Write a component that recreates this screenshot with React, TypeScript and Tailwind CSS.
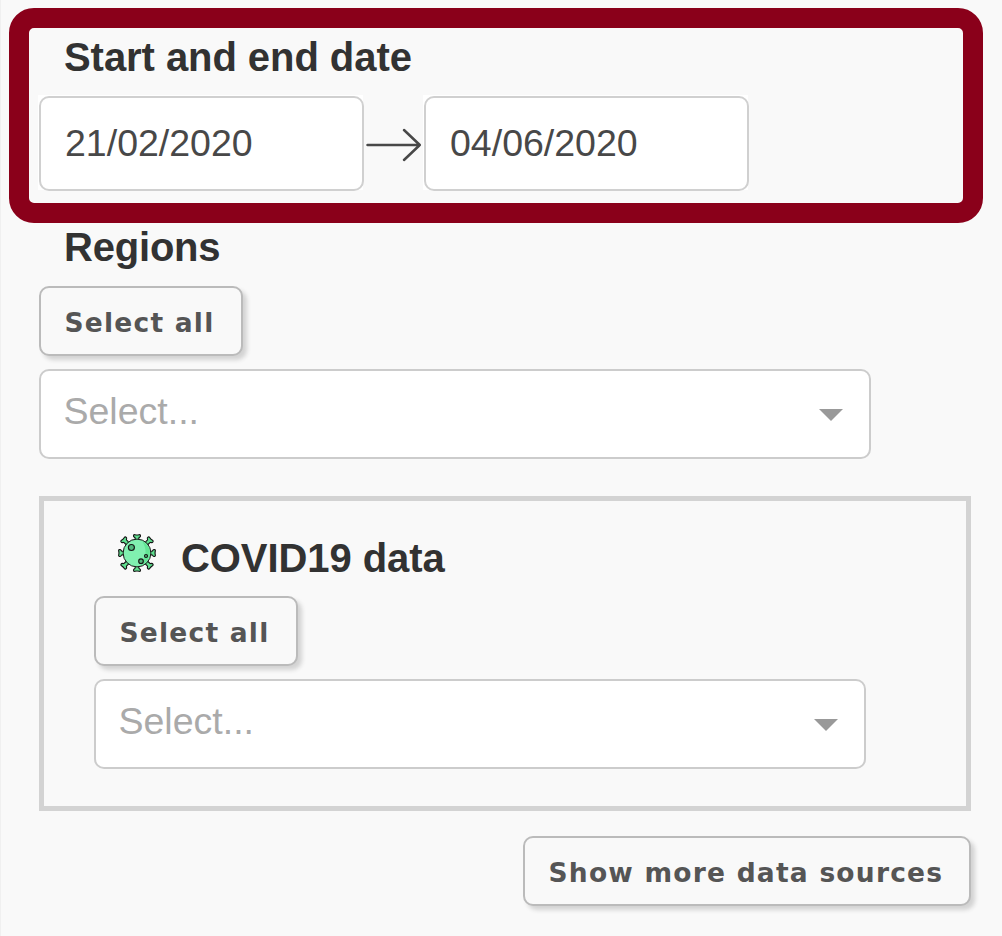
const spikes = [
  { angle: 0, reach: 0 },
  { angle: 45, reach: -1.6 },
  { angle: 90, reach: 0 },
  { angle: 135, reach: -1.6 },
  { angle: 180, reach: 0 },
  { angle: 225, reach: -1.6 },
  { angle: 270, reach: 0 },
  { angle: 315, reach: -1.6 },
];

function VirusIcon() {
  return (
    <svg className="h-[38px] w-[38px] shrink-0" viewBox="0 0 38 38" fill="none" stroke="#151515" strokeWidth="1.15" strokeLinejoin="round">
      {spikes.map(({ angle, reach }) => (
        <path
          key={angle}
          transform={`rotate(${angle} 19 19) translate(0 ${reach})`}
          fill="#5fe08f"
          d="M17.2 7.5V4.2Q17.1 3.4 16.2 3.1Q15.3 2.6 15.6 1.3Q15.9 .4 17 .7Q19 1.2 21 .7Q22.1 .4 22.4 1.3Q22.7 2.6 21.8 3.1Q20.9 3.4 20.8 4.2V7.5"
        />
      ))}
      <circle cx="19" cy="19" r="13.9" fill="#80f0b0" strokeWidth="1" />
      <path d="M24 7Q35.6 14 30 25.3Q27.5 29.7 22 31.6Q32 19 24 7Z" fill="#62e595" stroke="none" />
      <g fill="#50b87c">
        <circle cx="13.4" cy="13.5" r="3" />
        <circle cx="28" cy="22" r="1.5" />
        <circle cx="23" cy="27.2" r="2.3" />
      </g>
    </svg>
  );
}

function DateField({ value }: { value: string }) {
  return (
    <div className="h-[95px] w-[325px] shrink-0 bg-white pt-px pl-px">
      <div className="h-[95px] w-[325px] rounded-[10px] border-2 border-[#d0d0d0] bg-white pt-[22px] pl-6 text-[37.5px] leading-[46px] text-[#484848]">
        {value}
      </div>
    </div>
  );
}

function Button({ label, className = "" }: { label: string; className?: string }) {
  return (
    <button
      className={`flex h-[70px] items-center rounded-[10px] border-2 border-[#bbb] bg-[#f9f9f9] pt-[3px] pl-[23.5px] font-['DejaVu_Sans',sans-serif] text-[26.5px] font-bold tracking-[1.22px] whitespace-nowrap text-[#555] shadow-[4px_4px_4px_#d3d3d3] ${className}`}
    >
      {label}
    </button>
  );
}

function Select({ className = "" }: { className?: string }) {
  return (
    <div className={`flex h-[90px] justify-between rounded-[10px] border-2 border-[#ccc] bg-white pr-[26px] pl-[22.5px] ${className}`}>
      <span className="pt-[17px] text-[37.5px] leading-[46px] text-[#aaa]">Select...</span>
      <svg className="mt-[38px] h-3 w-6" viewBox="0 0 24 12" fill="#999">
        <path d="M0 0H24L12 12Z" />
      </svg>
    </div>
  );
}

export default function App() {
  return (
    <main className="flex h-[936px] w-[1002px] flex-col overflow-hidden border-l border-[#f0f0f0] bg-[#f9f9f9] pt-2 pl-2 font-['Liberation_Sans',Arial,sans-serif] text-[#323232]">
      <section className="h-[215px] w-[974px] shrink-0 rounded-[25px] border-[20px] border-[#8a001a] pt-[5px] pl-[9px]">
        <h2 className="pl-[26px] text-[40px] leading-[48px] font-bold tracking-[-0.06px]">Start and end date</h2>
        <div className="mt-[14px] flex">
          <DateField value="21/02/2020" />
          <svg className="h-[95px] w-[60px] shrink-0" viewBox="0 0 60 95" fill="none" stroke="#484848" strokeWidth="2.5" strokeLinecap="round" strokeLinejoin="round">
            <path d="M4.5 50H56.8M41 35L56.8 50L41 65" />
          </svg>
          <DateField value="04/06/2020" />
        </div>
      </section>
      <section className="pl-[30px]">
        <h2 className="pl-[25px] text-[40px] leading-[48px] font-bold tracking-[-0.2px]">Regions</h2>
        <Button label="Select all" className="mt-[15px] w-[204px]" />
        <Select className="mt-[13px] w-[832px]" />
      </section>
      <section className="mt-[37px] ml-[30px] h-[315px] w-[932px] shrink-0 border-[5px] border-[#d3d3d3] pt-[29px] pl-[50px]">
        <div className="flex items-start pl-6">
          <div className="pt-1"><VirusIcon /></div>
          <h2 className="pt-[4px] pl-[25px] text-[40px] leading-[48px] font-bold tracking-[-0.08px]">COVID19 data</h2>
        </div>
        <Button label="Select all" className="mt-[14px] w-[204px]" />
        <Select className="mt-[13px] w-[772px]" />
      </section>
      <Button label="Show more data sources" className="mt-[25px] ml-[514px] w-[448px] shrink-0" />
    </main>
  );
}
